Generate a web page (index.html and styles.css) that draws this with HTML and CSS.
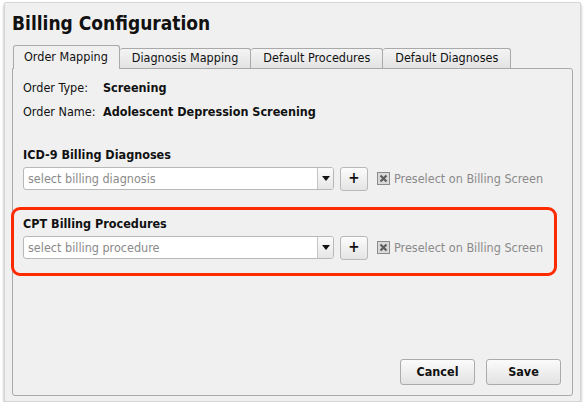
FILE: index.html
```html
<!DOCTYPE html>
<html>
<head>
<meta charset="utf-8">
<link rel="stylesheet" href="styles.css">
</head>
<body>
<div class="window">
  <h1 class="title">Billing Configuration</h1>
  <div class="tabs">
    <div class="tab active">Order Mapping</div>
    <div class="tab">Diagnosis Mapping</div>
    <div class="tab">Default Procedures</div>
    <div class="tab">Default Diagnoses</div>
  </div>
  <div class="panel">
    <div class="info">
      <div class="info-row"><span class="info-label">Order Type:</span><span class="info-value">Screening</span></div>
      <div class="info-row"><span class="info-label">Order Name:</span><span class="info-value">Adolescent Depression Screening</span></div>
    </div>
    <div class="section">
      <div class="section-title">ICD-9 Billing Diagnoses</div>
      <div class="field-row">
        <div class="combo"><span class="combo-text">select billing diagnosis</span><span class="combo-arrow"><svg width="8" height="5" viewBox="0 0 8 5"><path d="M0 0H8L4 5Z" fill="#111"/></svg></span></div>
        <div class="plus">+</div>
        <div class="check"><svg width="13" height="13" viewBox="0 0 13 13"><rect x="0.5" y="0.5" width="12" height="12" fill="#d9d9d9" stroke="#8a8a8a"/><path d="M3.5 3.5L9.5 9.5M9.5 3.5L3.5 9.5" stroke="#5e5e5e" stroke-width="2.2"/></svg><span>Preselect on Billing Screen</span></div>
      </div>
    </div>
    <div class="section highlight">
      <div class="section-title">CPT Billing Procedures</div>
      <div class="field-row">
        <div class="combo"><span class="combo-text">select billing procedure</span><span class="combo-arrow"><svg width="8" height="5" viewBox="0 0 8 5"><path d="M0 0H8L4 5Z" fill="#111"/></svg></span></div>
        <div class="plus">+</div>
        <div class="check"><svg width="13" height="13" viewBox="0 0 13 13"><rect x="0.5" y="0.5" width="12" height="12" fill="#d9d9d9" stroke="#8a8a8a"/><path d="M3.5 3.5L9.5 9.5M9.5 3.5L3.5 9.5" stroke="#5e5e5e" stroke-width="2.2"/></svg><span>Preselect on Billing Screen</span></div>
      </div>
    </div>
    <div class="spacer"></div>
    <div class="actions">
      <div class="btn">Cancel</div>
      <div class="btn">Save</div>
    </div>
  </div>
</div>
</body>
</html>
```

FILE: styles.css
```css
* { box-sizing: border-box; }
html, body { margin: 0; padding: 0; background: #ffffff; }
body {
  font-family: "DejaVu Sans Condensed", "DejaVu Sans", sans-serif;
  font-size: 12.5px;
  color: #111;
}
.window {
  margin: 2px 0 0 4px;
  width: 577px;
  height: 400px;
  background: #f0f0f0;
  border: 1px solid #d6d6d6;
  border-radius: 2px;
  box-shadow: 0 2px 3px rgba(0,0,0,0.35);
  padding: 0 0 0 7px;
  display: flex;
  flex-direction: column;
}
.title {
  margin: 8px 0 0 0;
  font-size: 19px;
  font-weight: bold;
  line-height: 24px;
  color: #111;
}
.tabs {
  display: flex;
  align-items: flex-end;
  margin: 10px 0 0 1px;
  height: 23px;
  position: relative;
  z-index: 1;
}
.tab {
  height: 20px;
  line-height: 18px;
  padding: 0 12px 0 12px;
  border: 1px solid #a9a9a9;
  border-bottom: none;
  border-left: none;
  border-radius: 3px 3px 0 0;
  background: linear-gradient(#f4f4f4, #e3e3e3);
  color: #111;
  white-space: nowrap;
}
.tab.active {
  line-height: 22px;
  border-left: 1px solid #a9a9a9;
  background: #f0f0f0;
  margin-bottom: -1px;
  height: 24px;
  padding: 0 11px 0 10px;
}
.panel {
  width: 561px;
  height: 328px;
  border: 1px solid #a9a9a9;
  border-radius: 0 3px 3px 3px;
  padding: 0 0 0 10px;
  display: flex;
  flex-direction: column;
}
.info { margin-top: 10px; }
.info-row {
  display: flex;
  height: 24px;
  line-height: 18px;
}
.info-label { width: 80px; }
.info-value { font-weight: bold; }
.section { margin-top: 19px; }
.section-title {
  font-weight: bold;
  line-height: 18px;
  height: 18px;
}
.field-row {
  display: flex;
  align-items: center;
  margin-top: 3px;
  height: 23px;
}
.combo {
  width: 311px;
  height: 23px;
  border: 1px solid #b8b8b8;
  border-radius: 3px;
  background: #fff;
  display: flex;
  overflow: hidden;
}
.combo-text {
  flex: 1;
  padding-left: 4px;
  line-height: 21px;
  color: #8a8a8a;
}
.combo-arrow {
  width: 16px;
  border-left: 1px solid #c4c4c4;
  background: linear-gradient(#fbfbfb, #e6e6e6);
  display: flex;
  align-items: center;
  justify-content: center;
}
.plus {
  margin-left: 6px;
  width: 28px;
  height: 24px;
  border: 1px solid #b8b8b8;
  border-radius: 3px;
  background: linear-gradient(#fcfcfc, #e4e4e4);
  text-align: center;
  line-height: 21px;
  font-weight: bold;
  font-size: 15px;
}
.check {
  margin-left: 9px;
  display: flex;
  align-items: center;
  color: #8a8a8a;
}
.check svg { margin-right: 4px; }
.highlight {
  margin-top: 17px;
  margin-left: -12px;
  width: 546px;
  border: 3px solid #ff2b00;
  border-radius: 9px;
  padding: 5px 0 14px 9px;
}
.spacer { flex: 1; }
.actions {
  display: flex;
  justify-content: flex-end;
  gap: 11px;
  padding-right: 11px;
  margin-bottom: 10px;
}
.btn {
  width: 75px;
  height: 26px;
  border: 1px solid #ababab;
  border-radius: 3px;
  background: linear-gradient(#fbfbfb, #e2e2e2);
  text-align: center;
  line-height: 24px;
  font-weight: bold;
}
```
